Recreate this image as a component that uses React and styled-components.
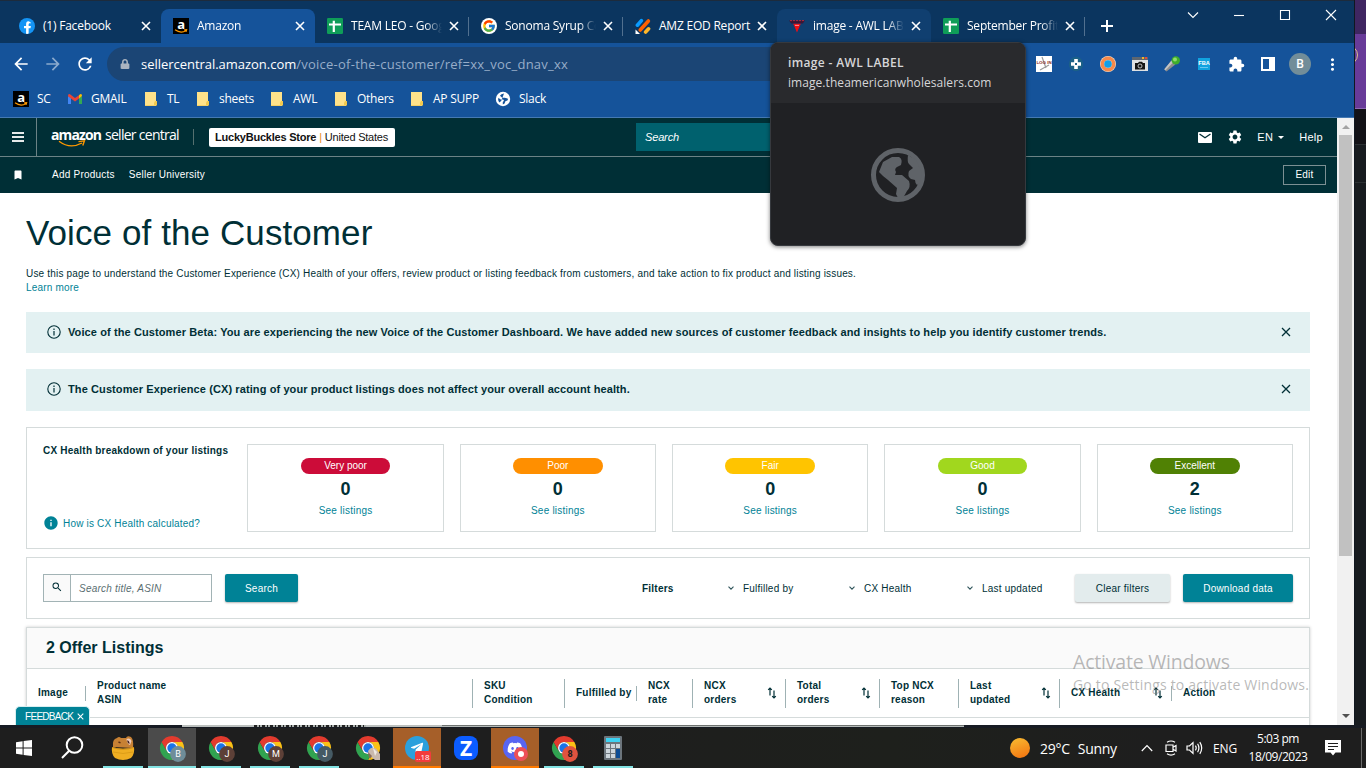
import styled, { createGlobalStyle } from "styled-components";
import { FcGoogle } from "react-icons/fc";
import { FaDiscord, FaFacebookF, FaLock, FaTelegramPlane } from "react-icons/fa";
import {
  MdArrowBack,
  MdArrowForward,
  MdBookmark,
  MdExtension,
  MdInfo,
  MdMoreVert,
  MdRefresh,
  MdSearch,
  MdSettings,
} from "react-icons/md";

const tabs = [
  { title: "(1) Facebook", icon: "facebook" },
  { title: "Amazon", icon: "amazon", active: true },
  { title: "TEAM LEO - Goog", icon: "sheets", divider: true },
  { title: "Sonoma Syrup Co", icon: "google", divider: true },
  { title: "AMZ EOD Report", icon: "jotform" },
  { title: "image - AWL LAB", icon: "awl", hover: true },
  { title: "September Profit", icon: "sheets", divider: true },
];

const bookmarks = [
  { label: "SC", icon: "amazon", width: 54 },
  { label: "GMAIL", icon: "gmail", width: 76 },
  { label: "TL", icon: "folder", width: 52 },
  { label: "sheets", icon: "folder", width: 74 },
  { label: "AWL", icon: "folder", width: 64 },
  { label: "Others", icon: "folder", width: 76 },
  { label: "AP SUPP", icon: "folder", width: 86 },
  { label: "Slack", icon: "globe", width: 70 },
];

const ratings = [
  { label: "Very poor", count: 0, color: "#cc0c39" },
  { label: "Poor", count: 0, color: "#ff8f00" },
  { label: "Fair", count: 0, color: "#ffc400" },
  { label: "Good", count: 0, color: "#a1d71e" },
  { label: "Excellent", count: 2, color: "#508104" },
];

const columns = [
  { lines: ["Image"] },
  { lines: ["Product name", "ASIN"], tall: true },
  { lines: ["SKU", "Condition"], tall: true },
  { lines: ["Fulfilled by"] },
  { lines: ["NCX", "rate"], tall: true },
  { lines: ["NCX", "orders"], tall: true, sort: true },
  { lines: ["Total", "orders"], tall: true, sort: true },
  { lines: ["Top NCX", "reason"], tall: true },
  { lines: ["Last", "updated"], tall: true, sort: true },
  { lines: ["CX Health"], sort: true },
  { lines: ["Action"], last: true },
];

const taskItems = [
  { icon: "frog", line: "short" },
  { icon: "chrome", badge: "B", color: "#6f8d99", state: "active" },
  { icon: "chrome", badge: "J", color: "#5d4037", line: "short" },
  { icon: "chrome", badge: "M", color: "#5d4037", line: "short" },
  { icon: "chrome", badge: "J", color: "#455a64", line: "short" },
  { icon: "chrome", photo: true },
  { icon: "telegram", state: "alert" },
  { icon: "zoom" },
  { icon: "discord", state: "alert" },
  { icon: "chrome", badge: "8", color: "#e0533f", dark: true, line: "short" },
  { icon: "calculator", line: "short" },
];

const AmazonIcon = () => (
  <svg width="16" height="16" viewBox="0 0 16 16">
    <rect width="16" height="16" fill="#000" />
    <text x="8" y="11" textAnchor="middle" fontFamily="Open Sans, sans-serif" fontWeight="700" fontSize="13" fill="#fff">
      a
    </text>
    <path d="M2 11.8 Q8 16 13 12.4 M11.2 11.9 L13.6 11.7 L13 13.8" fill="none" stroke="#f90" strokeWidth="1.2" />
  </svg>
);

const SheetsIcon = () => (
  <svg width="16" height="16" viewBox="0 0 16 16">
    <rect width="16" height="16" rx="1.2" fill="#0f9d58" />
    <path d="M2 6.5H14M6.8 2.8V14" stroke="#fff" strokeWidth="2.2" />
  </svg>
);

const JotformIcon = () => (
  <svg width="16" height="16" viewBox="0 0 16 16" strokeLinecap="round" strokeWidth="3.6">
    <path d="M2.4 7.2L6.4 2.6" stroke="#0a9bff" />
    <path d="M5.2 12L13.4 3" stroke="#ff6100" />
    <path d="M10.6 14L13.6 10.8" stroke="#ffb629" />
    <path d="M0.5 11.5V16H5Z" fill="#fff" />
  </svg>
);

const AwlIcon = () => (
  <svg width="16" height="16" viewBox="0 0 16 16">
    <path d="M0 2.5H16L13.8 5.5H2.2Z" fill="#3c1535" />
    <path d="M1 2.6H15" stroke="#b5293c" strokeDasharray="2 1" />
    <path d="M4.2 5.8H11.8L8 14.4Z" fill="#f20d14" />
    <path d="M6 7.4H10" stroke="#fbb" strokeWidth="0.8" />
  </svg>
);

const GmailIcon = () => (
  <svg width="16" height="16" viewBox="0 0 16 16">
    <path d="M1 5V13H4V7Z" fill="#4285f4" />
    <path d="M12 7V13H15V5Z" fill="#34a853" />
    <path d="M12 4.2L13 3.3Q15 2.4 15 5L12 7.4Z" fill="#fbbc04" />
    <path d="M1 5Q1 2.4 3 3.3L8 7.1L12 4.2V7.4L8 10.5L1 5.2Z" fill="#ea4335" />
  </svg>
);

const FolderIcon = () => (
  <svg width="16" height="16" viewBox="0 0 16 16">
    <path d="M2 1H13V15H2Z" fill="#ffe28a" />
    <path d="M12 10H14V14.5H11V12Z" fill="#f2c94e" />
    <path d="M2 14.5H13" stroke="#f4d067" />
  </svg>
);

const SlackGlobe = () => (
  <svg width="16" height="16" viewBox="0 0 16 16">
    <circle cx="8" cy="8" r="7.2" fill="#fff" />
    <path d="M9 2.6Q6 3 5 4.8L7.2 6.8H9.8L12.6 7.6Q13.4 8.6 12.4 9.6L10.4 10.2L9.6 12.6L7.8 13.4V11L9 9.8L8.2 8.4H5.6L3.4 6.8Q2.4 9.6 4.2 11.4L6.2 10" fill="#15539a" />
  </svg>
);

const FacebookIcon = styled(FaFacebookF)`
  width: 16px;
  height: 16px;
  padding: 3px 3px 0 4px;
  border-radius: 50%;
  color: #fff;
  background: #1494f5;
`;

const WhiteDisc = styled.span`
  width: 16px;
  height: 16px;
  display: flex;
  align-items: center;
  justify-content: center;
  flex: none;
  border-radius: 50%;
  background: #fff;
`;

const favicons = {
  facebook: <FacebookIcon />,
  amazon: <AmazonIcon />,
  sheets: <SheetsIcon />,
  google: (
    <WhiteDisc>
      <FcGoogle size={14} />
    </WhiteDisc>
  ),
  jotform: <JotformIcon />,
  awl: <AwlIcon />,
  gmail: <GmailIcon />,
  folder: <FolderIcon />,
  globe: <SlackGlobe />,
};

const CloseIcon = ({ size = 10, width = 1.6 }) => (
  <svg width={size} height={size} viewBox="0 0 10 10">
    <path d="M1 1L9 9M9 1L1 9" stroke="currentColor" strokeWidth={width} fill="none" />
  </svg>
);

const SortIcon = () => (
  <svg width="10" height="12" viewBox="0 0 10 12" fill="none" stroke="#002f36" strokeWidth="1.2">
    <path d="M3 8.5V1.2M1.2 2.9L3 1L4.8 2.9" />
    <path d="M7 3.5V10.8M5.2 9.1L7 11L8.8 9.1" />
  </svg>
);

const ChevronIcon = () => (
  <svg width="6" height="4" viewBox="0 0 6 4">
    <path d="M0.5 0.6L3 3.1L5.5 0.6" fill="none" stroke="#30555b" strokeWidth="1.1" />
  </svg>
);

const ChromeIcon = ({ badge, color, dark, photo }) => (
  <svg width="28" height="28" viewBox="0 0 28 28">
    {["#fbc116", "#31a350", "#e33b2e"].map((fill, i) => (
      <path
        key={fill}
        d="M12 6H22.4A12 12 0 0 1 12 24L17.2 15A6 6 0 0 0 12 6Z"
        transform={`translate(2 2) rotate(${i * 120} 12 12)`}
        fill={fill}
      />
    ))}
    <circle cx="14" cy="14" r="6" fill="#fff" />
    <circle cx="14" cy="14" r="4.7" fill="#1a73e8" />
    {badge && <circle cx="20" cy="20" r="7.9" fill={color} />}
    {badge && (
      <text x="20" y="23.2" textAnchor="middle" fontFamily="Roboto, sans-serif" fontWeight={dark ? 700 : 400} fontSize="9" fill={dark ? "#1b1b1b" : "#fff"}>
        {badge}
      </text>
    )}
    {photo && (
      <g>
        <path d="M14 17Q17 12 22 14.5L26 20V26H21L16 22Z" fill="#c9b8ac" />
        <path d="M14 18L18 22L16 25L14.5 22Z" fill="#8a6a58" />
        <path d="M19 14L23 18L21 22Z" fill="#efe9e4" />
      </g>
    )}
  </svg>
);

const FrogIcon = () => (
  <svg width="28" height="28" viewBox="0 0 28 28">
    <path d="M4 13Q3 5 8 4Q10 2 12 4H17Q18 1 22 3Q25 6 24 14Z" fill="#c78134" />
    <path d="M3 13Q14 16.5 25 13Q26 20 22 24Q14 28 6 24Q2 20 3 13Z" fill="#efae22" />
    <path d="M3 13.4Q14 17 25 13.4" stroke="#c98a1a" fill="none" />
    <path d="M4 18Q14 21 24 18" stroke="#dc9d18" fill="none" />
    <path d="M17.5 5Q21 3.5 22.5 7L21 11Q18 10 17.5 5Z" fill="#f0cdbd" />
    <path d="M18 6.5Q20.5 6 20.5 10Q18.5 9.5 18 6.5Z" fill="#432017" />
    <path d="M9.5 8L11.5 8.8" stroke="#5a2d12" strokeWidth="1.4" />
  </svg>
);

const CalculatorIcon = () => (
  <svg width="28" height="28" viewBox="0 0 28 28">
    <rect x="5" y="2" width="18" height="24" rx="1" fill="#6c757c" />
    <rect x="7" y="4" width="14" height="4" fill="#3ed2f2" />
    {[0, 1, 2].map((row) =>
      [0, 1, 2].map((col) => (
        <rect key={`${row}${col}`} x={7 + col * 5} y={10 + row * 5} width="4" height="4" fill="#cdd6dc" />
      ))
    )}
    <rect x="17" y="15" width="4" height="9" fill="#0c4c94" />
  </svg>
);

const TaskIcon = ({ item }) => {
  if (item.icon === "chrome") return <ChromeIcon {...item} />;
  if (item.icon === "frog") return <FrogIcon />;
  if (item.icon === "calculator") return <CalculatorIcon />;
  if (item.icon === "zoom") return <ZoomTile>Z</ZoomTile>;
  if (item.icon === "telegram")
    return (
      <Disc $color="#2ba0dc">
        <FaTelegramPlane size={14} />
        <CountBadge>..18</CountBadge>
      </Disc>
    );
  return (
    <Disc $color="#5865f2">
      <FaDiscord size={16} />
      <RecordBadge />
    </Disc>
  );
};

const Extensions = () => (
  <ExtensionRow>
    <svg width="16" height="16" viewBox="0 0 16 16">
      <rect width="16" height="16" fill="#fff" />
      <path d="M6 1L10 12M4 14L13 9" stroke="#9b9b9b" strokeWidth="1.2" />
      <text x="8" y="8" textAnchor="middle" fontFamily="Liberation Sans, sans-serif" fontWeight="700" fontSize="4.4" fill="#8b1f24">
        LOG IN
      </text>
    </svg>
    <svg width="16" height="16" viewBox="0 0 16 16">
      <circle cx="8" cy="8" r="7.2" fill="#1c6187" />
      <path d="M8 3V13M3 8H13" stroke="#fff" strokeWidth="3.6" />
      <rect x="7" y="7" width="2" height="2" fill="#1c6187" />
    </svg>
    <svg width="16" height="16" viewBox="0 0 16 16">
      <circle cx="8" cy="8" r="8" fill="#f6dcc4" />
      <circle cx="8" cy="8" r="5.7" fill="none" stroke="#f5894a" strokeWidth="3.4" />
      <circle cx="8" cy="8" r="3.8" fill="#0f9fe8" />
    </svg>
    <svg width="16" height="16" viewBox="0 0 16 16">
      <path d="M0 2H16V15H0Z" fill="#dfe1e3" />
      <path d="M0 1H16V4H0Z" fill="#5d6670" />
      <path d="M10 1H12V3H10Z" fill="#f0b429" />
      <path d="M13 1H15V3H13Z" fill="#e04a3f" />
      <path d="M3 7H6L7 5.8H10L11 7H13V13.5H3Z" fill="#151515" />
      <circle cx="8" cy="10" r="2" fill="none" stroke="#dfe1e3" strokeWidth="0.8" />
    </svg>
    <svg width="16" height="16" viewBox="0 0 16 16">
      <path d="M7.5 4.6L11.4 8.5L2.5 15.5L0.3 13.3Z" fill="#8d8d8d" />
      <path d="M7.5 4.6L9.2 6.3L1.4 14.4L0.3 13.3Z" fill="#c4c4c4" />
      <circle cx="11.8" cy="4.4" r="4.2" fill="#3fae2a" />
      <circle cx="11" cy="3.4" r="2" fill="#8fdc6c" />
    </svg>
    <svg width="16" height="16" viewBox="0 0 16 16">
      <rect x="2" y="2" width="12" height="12" fill="#11a3e0" />
      <text x="8" y="9" textAnchor="middle" fontFamily="Liberation Sans, sans-serif" fontWeight="700" fontSize="5.6" fill="#fff">
        FBA
      </text>
      <path d="M4 11.5H12" stroke="#7fd0f2" strokeWidth="0.8" />
    </svg>
    <MdExtension size={17} />
    <svg width="16" height="16" viewBox="0 0 16 16">
      <path d="M2 2H14V14H2Z" fill="none" stroke="#fff" strokeWidth="2" />
      <rect x="9" y="2" width="5" height="12" fill="#fff" />
    </svg>
    <Avatar>B</Avatar>
    <MdMoreVert size={19} />
  </ExtensionRow>
);

const BrowserTop = () => (
  <>
    <TabStrip>
      {tabs.map((tab, i) => (
        <Tab key={i} $active={tab.active} $hover={tab.hover} $divider={tab.divider}>
          {favicons[tab.icon]}
          <TabTitle>{tab.title}</TabTitle>
          <CloseIcon />
        </Tab>
      ))}
      <NewTab>
        <svg width="12" height="12" viewBox="0 0 12 12">
          <path d="M6 0V12M0 6H12" stroke="#fff" strokeWidth="2" />
        </svg>
      </NewTab>
      <WindowControls>
        <svg width="12" height="12" viewBox="0 0 12 12">
          <path d="M1 3.5L6 8.5L11 3.5" />
        </svg>
        <svg width="12" height="12" viewBox="0 0 12 12">
          <path d="M1 6.5H11" />
        </svg>
        <svg width="12" height="12" viewBox="0 0 12 12">
          <path d="M1.5 1.5H10.5V10.5H1.5Z" />
        </svg>
        <svg width="12" height="12" viewBox="0 0 12 12">
          <path d="M1 1L11 11M11 1L1 11" />
        </svg>
      </WindowControls>
    </TabStrip>
    <Toolbar>
      <NavIcons>
        <MdArrowBack />
        <MdArrowForward opacity={0.5} />
        <MdRefresh />
      </NavIcons>
      <AddressBar>
        <FaLock size={10} color="#aab3c0" />
        <Url>
          <b>sellercentral.amazon.com</b>
          <span>/voice-of-the-customer/ref=xx_voc_dnav_xx</span>
        </Url>
      </AddressBar>
      <Extensions />
    </Toolbar>
    <BookmarkBar>
      {bookmarks.map((mark) => (
        <Bookmark key={mark.label} $width={mark.width}>
          {favicons[mark.icon]}
          <span>{mark.label}</span>
        </Bookmark>
      ))}
    </BookmarkBar>
  </>
);

const TabPreview = () => (
  <Preview>
    <PreviewHead>
      <b>image - AWL LABEL</b>
      <span>image.theamericanwholesalers.com</span>
    </PreviewHead>
    <PreviewBody>
      <svg width="56" height="56" viewBox="0 0 56 56" fill="#5f6368">
        <circle cx="28" cy="28" r="24.5" fill="none" stroke="#5f6368" strokeWidth="5" />
        <path d="M9 25L13 15L22 10H29Q33 12 31 18L27 20Q24 22 26 25L25 28H32L39 34Q41 40 37 44L33 51H28L26 47L27 41L18 33L13 29Z" />
        <path d="M38 8L46 13L52 26L50 36L47 38Q45 36 45 33L41 32Q37 29 39 24L43 21L39 17Q37 15 38 8Z" />
      </svg>
    </PreviewBody>
  </Preview>
);

const SellerHeader = () => (
  <Header>
    <HeaderTop>
      <MenuButton>
        <i />
        <i />
        <i />
      </MenuButton>
      <Logo>
        <b>amazon</b>
        <span>seller central</span>
        <Smile width="28" height="8" viewBox="0 0 28 8">
          <path d="M1 1.2Q12 9.5 24 3M20.5 1.6L26.4 0.9L24.8 5.6" />
        </Smile>
      </Logo>
      <StoreButton>
        <b>LuckyBuckles Store</b>
        <em>|</em>
        <span>United States</span>
      </StoreButton>
      <HeaderSearch>Search</HeaderSearch>
      <HeaderActions>
        <svg width="14" height="11" viewBox="0 0 14 11">
          <rect width="14" height="11" rx="1" fill="#fff" />
          <path d="M1.5 2L7 5.8L12.5 2" fill="none" stroke="#002f36" strokeWidth="1.3" />
        </svg>
        <MdSettings size={16} />
        <Language>
          EN
          <Caret />
        </Language>
        <span>Help</span>
      </HeaderActions>
    </HeaderTop>
    <SubNav>
      <MdBookmark size={12} />
      <NavLink $left={28}>Add Products</NavLink>
      <NavLink $left={14}>Seller University</NavLink>
      <EditButton>Edit</EditButton>
    </SubNav>
  </Header>
);

const Notice = ({ children, height }) => (
  <NoticeBox $height={height}>
    <svg width="14" height="14" viewBox="0 0 14 14">
      <circle cx="7" cy="7" r="6.2" fill="none" stroke="#002f36" strokeWidth="1.1" />
      <path d="M7 6V10.4M7 3.6V5" stroke="#002f36" strokeWidth="1.2" />
    </svg>
    <span>{children}</span>
    <CloseIcon width={1.3} />
  </NoticeBox>
);

const Taskbar = () => (
  <Bar>
    <StartButton>
      <svg width="16" height="16" viewBox="0 0 16 16" fill="#fff">
        <path d="M0 2.2L6.6 1.3V7.5H0ZM7.6 1.1L16 0V7.5H7.6ZM0 8.5H6.6V14.7L0 13.8ZM7.6 8.5H16V16L7.6 14.9Z" />
      </svg>
    </StartButton>
    <SearchButton>
      <svg width="23" height="23" viewBox="0 0 23 23" fill="none" stroke="#fff" strokeWidth="2">
        <circle cx="13.5" cy="9" r="7.8" />
        <path d="M8.2 14.8L1 22" />
      </svg>
    </SearchButton>
    {taskItems.map((item, i) => (
      <TaskButton key={i} $state={item.state} $line={item.line}>
        <TaskIcon item={item} />
      </TaskButton>
    ))}
    <Tray>
      <Sun />
      <Weather>
        <span>29°C</span>
        <span>Sunny</span>
      </Weather>
      <TrayIcons>
        <svg width="12" height="8" viewBox="0 0 12 8">
          <path d="M0.8 7L6 1.6L11.2 7" />
        </svg>
        <svg width="12" height="16" viewBox="0 0 12 16">
          <path d="M1 5H8V11.5H1ZM8 7.3L11 5.5V11L8 9.2M2 2.3Q6 -0.3 10 2.3M2 13.8Q6 16.4 10 13.8" />
        </svg>
        <svg width="17" height="14" viewBox="0 0 17 14">
          <path d="M1 5H3.5L7 1.6V12.4L3.5 9H1ZM9.4 4.6Q11 7 9.4 9.4M11.6 2.8Q14.2 7 11.6 11.2M13.8 1.2Q17.6 7 13.8 12.8" />
        </svg>
      </TrayIcons>
      <Lang>ENG</Lang>
      <Clock>
        <span>5:03 pm</span>
        <span>18/09/2023</span>
      </Clock>
      <svg width="16" height="16" viewBox="0 0 16 16">
        <path d="M0 0H16V12.5H10.5L8 15.5L5.5 12.5H0Z" fill="#fff" />
        <path d="M3 3.5H13M3 6.5H13M3 9.5H9" stroke="#1e1e1e" />
      </svg>
      <ShowDesktop />
    </Tray>
  </Bar>
);

const App = () => {
  return (
    <Screen>
      <GlobalStyle />
      <Desktop>
        <Window>
          <BrowserTop />
          <Viewport>
            <Page>
              <SellerHeader />
              <Content>
                <Title>Voice of the Customer</Title>
                <Intro>
                  Use this page to understand the Customer Experience (CX) Health of your offers, review product or
                  listing feedback from customers, and take action to fix product and listing issues.
                  <LearnMore>Learn more</LearnMore>
                </Intro>
                <Notice height={41}>
                  Voice of the Customer Beta: You are experiencing the new Voice of the Customer Dashboard. We have
                  added new sources of customer feedback and insights to help you identify customer trends.
                </Notice>
                <Notice height={42}>
                  The Customer Experience (CX) rating of your product listings does not affect your overall account
                  health.
                </Notice>
                <HealthPanel>
                  <HealthLabel>
                    <b>CX Health breakdown of your listings</b>
                    <HelpLink>
                      <MdInfo size={16} />
                      <span>How is CX Health calculated?</span>
                    </HelpLink>
                  </HealthLabel>
                  {ratings.map((rating) => (
                    <RatingCard key={rating.label}>
                      <Pill $color={rating.color}>{rating.label}</Pill>
                      <Count>{rating.count}</Count>
                      <SeeListings>See listings</SeeListings>
                    </RatingCard>
                  ))}
                </HealthPanel>
                <FilterPanel>
                  <SearchField>
                    <SearchCell>
                      <MdSearch size={12} />
                    </SearchCell>
                    <Placeholder>Search title, ASIN</Placeholder>
                  </SearchField>
                  <Button $primary $width={73}>
                    Search
                  </Button>
                  <FilterLabel>Filters</FilterLabel>
                  <Filter $width={121}>
                    <ChevronIcon />
                    Fulfilled by
                  </Filter>
                  <Filter $width={118}>
                    <ChevronIcon />
                    CX Health
                  </Filter>
                  <Filter $width={108}>
                    <ChevronIcon />
                    Last updated
                  </Filter>
                  <Button $width={95}>Clear filters</Button>
                  <Button $primary $width={110}>
                    Download data
                  </Button>
                </FilterPanel>
                <Listings>
                  <ListingsTitle>2 Offer Listings</ListingsTitle>
                  <HeadRow>
                    {columns.map((column, i) => (
                      <HeadCell key={i} $tall={column.tall} $last={column.last}>
                        <div>
                          {column.lines.map((line) => (
                            <p key={line}>{line}</p>
                          ))}
                        </div>
                        {column.sort && <SortIcon />}
                      </HeadCell>
                    ))}
                  </HeadRow>
                </Listings>
              </Content>
              <Feedback>
                FEEDBACK <CloseIcon size={7} width={1.5} />
              </Feedback>
            </Page>
            <Scrollbar>
              <Arrow $up />
              <Thumb />
              <Arrow />
            </Scrollbar>
          </Viewport>
          <TabPreview />
        </Window>
        <Behind>
          <BehindTop>
            <Ring />
          </BehindTop>
          <BehindRows>
            <i />
            <i />
          </BehindRows>
        </Behind>
        <Watermark>
          <h2>Activate Windows</h2>
          <p>Go to Settings to activate Windows.</p>
        </Watermark>
      </Desktop>
      <Sliver>
        <SliverLight />
      </Sliver>
      <Taskbar />
    </Screen>
  );
};

export default App;

const GlobalStyle = createGlobalStyle`
  * {
    box-sizing: border-box;
    margin: 0;
    padding: 0;
  }

  body {
    overflow: hidden;
  }

  svg {
    display: block;
    flex: none;
  }
`;

const Screen = styled.div`
  width: 1366px;
  height: 768px;
  display: flex;
  flex-direction: column;
  overflow: hidden;
  white-space: nowrap;
  background: #1e1e1e;
  font-family: "Liberation Sans", Arial, sans-serif;
`;

const Desktop = styled.div`
  position: relative;
  display: flex;
  height: 725px;
`;

const Window = styled.div`
  position: relative;
  width: 1354px;
  display: flex;
  flex-direction: column;
  background: #15539a;
  color: #fff;
`;

const TabStrip = styled.div`
  height: 43px;
  padding: 8px 0 0 7px;
  display: flex;
  border-top: 1px solid #1d2b3c;
  background: #0b355f;
  font-family: "Open Sans", sans-serif;
  font-size: 12px;
  letter-spacing: -0.22px;
`;

const Tab = styled.div`
  position: relative;
  width: 154px;
  height: 34px;
  padding: 0 10px 0 12px;
  display: flex;
  align-items: center;
  border-radius: 8px 8px 0 0;
  background: ${({ $active, $hover }) => ($active ? "#15539a" : $hover ? "#103f70" : "none")};

  &::after {
    content: "";
    display: ${({ $divider }) => ($divider ? "block" : "none")};
    position: absolute;
    right: 0;
    top: 8px;
    width: 1px;
    height: 19px;
    background: #51708f;
  }
`;

const TabTitle = styled.span`
  width: 91px;
  margin: -2px 7px 0 8px;
  mask-image: linear-gradient(90deg, #000 74px, transparent 91px);

  ${Tab}:first-child &, ${Tab}:nth-child(5) & {
    mask-image: none;
  }
`;

const NewTab = styled.div`
  padding: 11px 16px;
`;

const WindowControls = styled.div`
  margin-left: auto;
  padding-right: 17px;
  display: flex;
  gap: 34px;

  path {
    fill: none;
    stroke: #fff;
    stroke-width: 1.1;
  }
`;

const Toolbar = styled.div`
  height: 43px;
  padding-bottom: 1px;
  display: flex;
  align-items: center;
`;

const NavIcons = styled.div`
  width: 107px;
  padding: 0 0 1px 11px;
  display: flex;
  gap: 12px;
  font-size: 20px;
`;

const AddressBar = styled.div`
  width: 900px;
  height: 34px;
  padding: 0 0 1px 13px;
  display: flex;
  align-items: center;
  gap: 11px;
  border-radius: 17px;
  background: #1b4575;
`;

const Url = styled.div`
  font-family: "Open Sans", sans-serif;
  font-size: 13px;

  b {
    font-weight: 400;
    letter-spacing: -0.03px;
  }
  span {
    color: #97adc9;
    letter-spacing: 0.25px;
  }
`;

const ExtensionRow = styled.div`
  margin-left: auto;
  padding: 0 6px 0 0;
  display: grid;
  grid-template-columns: repeat(10, 32px);
  place-items: center;
`;

const Avatar = styled.div`
  width: 22px;
  height: 22px;
  border-radius: 50%;
  background: #728d99;
  font: 500 12px/22px Roboto, sans-serif;
  text-align: center;
`;

const BookmarkBar = styled.div`
  height: 32px;
  padding: 5px 0 0 13px;
  display: flex;
  border-bottom: 1px solid #4579b2;
`;

const Bookmark = styled.div`
  width: ${({ $width }) => $width}px;
  height: 16px;
  display: flex;
  align-items: center;
  gap: 8px;
  font-family: "Open Sans", sans-serif;
  font-size: 12px;
  letter-spacing: -0.25px;

  span {
    margin-top: -1px;
  }
`;

const Viewport = styled.div`
  flex: 1;
  display: flex;
  min-height: 0;
`;

const Page = styled.div`
  position: relative;
  width: 1337px;
  overflow: hidden;
  background: #fff;
  color: #002f36;
`;

const Header = styled.header`
  background: #002f36;
  color: #fff;
`;

const HeaderTop = styled.div`
  height: 39px;
  display: flex;
  align-items: center;
  border-bottom: 1px solid #6b8386;
`;

const MenuButton = styled.div`
  width: 37px;
  height: 38px;
  padding: 0 12px;
  display: flex;
  flex-direction: column;
  justify-content: center;
  gap: 2px;
  border-right: 1px solid #6b8386;

  i {
    height: 2px;
    background: #e6eaea;
  }
`;

const Logo = styled.div`
  position: relative;
  width: 157px;
  height: 16px;
  margin-right: 15px;
  padding-left: 14px;
  display: flex;
  align-items: center;
  gap: 4px;
  border-right: 1px solid #55706f;
  font-family: "Open Sans", sans-serif;
  font-size: 14px;
  line-height: 12px;

  b {
    margin-top: -4px;
    letter-spacing: -0.9px;
  }
  span {
    margin-top: -4px;
    letter-spacing: -0.72px;
  }
`;

const Smile = styled.svg`
  position: absolute;
  left: 21px;
  top: 11px;
  fill: none;
  stroke: #f90;
  stroke-width: 1.4;
`;

const StoreButton = styled.div`
  width: 186px;
  height: 19px;
  padding-left: 6px;
  border-radius: 2px;
  background: #fff;
  color: #111;
  font-size: 11px;
  line-height: 19px;
  letter-spacing: -0.22px;

  em {
    margin: 0 3px;
    color: #e88b1c;
    font-style: normal;
  }
`;

const HeaderSearch = styled.div`
  width: 330px;
  height: 28px;
  margin-left: 241px;
  padding-left: 9px;
  background: #00616e;
  font-size: 11px;
  font-style: italic;
  line-height: 28px;
  letter-spacing: -0.15px;
`;

const HeaderActions = styled.div`
  margin-left: auto;
  padding-right: 14px;
  display: flex;
  align-items: center;
  gap: 15px;
  font-size: 11px;
  letter-spacing: 0.3px;

  svg + svg {
    margin-right: -1px;
  }
`;

const Language = styled.span`
  display: flex;
  align-items: center;
  gap: 5px;
`;

const Caret = styled.i`
  border: 3px solid transparent;
  border-top-color: #fff;
  border-bottom: 0;
`;

const SubNav = styled.nav`
  height: 36px;
  padding: 0 11px 1px 12px;
  display: flex;
  align-items: center;
  font-size: 10px;
  letter-spacing: 0.23px;
`;

const NavLink = styled.span`
  margin-left: ${({ $left }) => $left}px;
`;

const EditButton = styled.span`
  width: 43px;
  height: 20px;
  margin-left: auto;
  border: 1px solid #7c9093;
  line-height: 18px;
  text-align: center;
`;

const Content = styled.main`
  padding: 20px 27px 0 26px;
  font-size: 10px;
  letter-spacing: 0.22px;
`;

const Title = styled.h1`
  font-size: 35px;
  font-weight: 400;
  line-height: 40px;
  letter-spacing: 0.1px;
`;

const Intro = styled.p`
  margin: 14px 0 17px;
  line-height: 14px;
  letter-spacing: 0.18px;
`;

const LearnMore = styled.a`
  display: block;
  color: #008296;
`;

const NoticeBox = styled.div`
  height: ${({ $height }) => $height}px;
  margin-bottom: 16px;
  padding: 0 19px 2px 21px;
  display: flex;
  align-items: center;
  background: #e3f1f2;
  font-size: 11px;
  font-weight: 700;
  letter-spacing: 0.1px;

  span {
    margin: 0 auto 0 7px;
  }
`;

const Panel = styled.section`
  border: 1px solid #d5dbdb;
  background: #fff;
`;

const HealthPanel = styled(Panel)`
  height: 122px;
  padding: 16px;
  display: grid;
  grid-template-columns: 188.4px repeat(5, 1fr);
  grid-template-rows: 88px;
  gap: 16px;
`;

const HealthLabel = styled.div`
  padding: 1px 0;
  display: flex;
  flex-direction: column;
  justify-content: space-between;
`;

const HelpLink = styled.a`
  display: flex;
  align-items: center;
  gap: 4px;
  color: #008296;
  letter-spacing: 0.19px;
`;

const RatingCard = styled.div`
  padding-top: 13px;
  display: flex;
  flex-direction: column;
  align-items: center;
  border: 1px solid #d5dbdb;
`;

const Pill = styled.span`
  width: 89.5px;
  height: 16px;
  border-radius: 8px;
  background: ${({ $color }) => $color};
  color: #fff;
  line-height: 16px;
  letter-spacing: 0;
  text-align: center;
`;

const Count = styled.b`
  margin-top: 5px;
  font-size: 18px;
  line-height: 20px;
  letter-spacing: 0;
`;

const SeeListings = styled.a`
  margin-top: 6px;
  color: #008296;
  line-height: 12px;
`;

const FilterPanel = styled(Panel)`
  height: 62px;
  margin: 8px 0;
  padding: 0 16px;
  display: flex;
  align-items: center;
`;

const SearchField = styled.div`
  width: 169px;
  height: 28px;
  margin-right: 13px;
  display: flex;
  border: 1px solid #a2b3b5;
`;

const SearchCell = styled.div`
  width: 27px;
  display: flex;
  justify-content: center;
  padding-top: 6px;
  border-right: 1px solid #a2b3b5;
  background: #fafafa;
`;

const Placeholder = styled.span`
  padding-left: 8px;
  color: #5a6e71;
  font-style: italic;
  line-height: 27px;
`;

const Button = styled.button`
  width: ${({ $width }) => $width}px;
  height: 28px;
  border: 0;
  border-radius: 2px;
  box-shadow: 0 1px 2px rgba(0, 0, 0, 0.3);
  background: ${({ $primary }) => ($primary ? "#008296" : "#e3eced")};
  color: ${({ $primary }) => ($primary ? "#fff" : "#002f36")};
  font: inherit;
  letter-spacing: inherit;

  & + & {
    margin-left: 13px;
  }
`;

const FilterLabel = styled.b`
  width: 86px;
  margin-left: 344px;
`;

const Filter = styled.span`
  width: ${({ $width }) => $width}px;
  display: flex;
  align-items: center;
  gap: 9px;
`;

const Listings = styled(Panel)`
  height: 110px;
  box-shadow: 0 0 3px rgba(0, 0, 0, 0.2);
`;

const ListingsTitle = styled.h3`
  height: 41px;
  padding-left: 19px;
  border-bottom: 1px solid #d5dbdb;
  background: #fafafa;
  font-size: 16px;
  line-height: 40px;
  letter-spacing: 0;
`;

const HeadRow = styled.div`
  height: 49px;
  display: grid;
  grid-template-columns: 59px 387px 92px 72px 56px 93px 94px 79px 101px 112px 1fr;
  border-bottom: 1px solid #d5dbdb;
  font-weight: 700;
  line-height: 14px;
`;

const HeadCell = styled.div`
  position: relative;
  padding: 0 9px 0 11px;
  display: flex;
  align-items: center;
  justify-content: space-between;

  &::after {
    content: "";
    display: ${({ $last }) => ($last ? "none" : "block")};
    position: absolute;
    right: 0;
    width: 1px;
    height: ${({ $tall }) => ($tall ? 29 : 15)}px;
    background: #9fb2b4;
  }
`;

const Feedback = styled.div`
  position: absolute;
  left: 15px;
  bottom: 0;
  width: 75px;
  height: 19px;
  padding-left: 9px;
  display: flex;
  align-items: center;
  gap: 4px;
  border: 1px solid #d9eef0;
  border-bottom: 0;
  border-radius: 5px 5px 0 0;
  background: #008296;
  color: #fff;
  font-size: 10px;
  letter-spacing: -0.7px;
`;

const Scrollbar = styled.div`
  width: 17px;
  display: flex;
  flex-direction: column;
  align-items: center;
  background: #f1f1f1;
`;

const Arrow = styled.i`
  margin: ${({ $up }) => ($up ? "7px 0 6px" : "auto 0 7px")};
  border: 4px solid transparent;
  border-top: ${({ $up }) => ($up ? "0" : "4px solid #505050")};
  border-bottom: ${({ $up }) => ($up ? "4px solid #a3a3a3" : "0")};
`;

const Thumb = styled.div`
  width: 13px;
  height: 421px;
  background: #c1c1c1;
`;

const Preview = styled.div`
  position: absolute;
  left: 770px;
  top: 42px;
  width: 256px;
  height: 204px;
  border: 1px solid #36393e;
  border-radius: 8px;
  overflow: hidden;
  box-shadow: 0 1px 4px rgba(0, 0, 0, 0.5);
  background: #202124;
`;

const PreviewHead = styled.div`
  height: 60px;
  padding: 10px 17px;
  display: flex;
  flex-direction: column;
  background: #292a2d;
  color: #d6d6d8;
  font-family: "Open Sans", sans-serif;
  font-size: 12px;
  line-height: 20px;

  b {
    font-weight: 600;
    letter-spacing: 0.35px;
  }
  span {
    letter-spacing: 0.06px;
  }
`;

const PreviewBody = styled.div`
  height: 143px;
  padding-top: 44px;
  display: flex;
  justify-content: center;
`;

const Behind = styled.div`
  flex: 1;
  border-left: 1px solid #101720;
  background: #171b1f;
`;

const BehindTop = styled.div`
  height: 109px;
  overflow: hidden;
  border-bottom: 1px solid #8d68b3;
  background: linear-gradient(#3f2661 34px, #683b99 34px);
`;

const Ring = styled.div`
  width: 20px;
  height: 20px;
  margin: 45px 0 0 -17px;
  border: 1px solid #d9c08c;
  border-radius: 50%;
`;

const BehindRows = styled.div`
  i {
    display: block;
    height: 38px;
    border-bottom: 1px solid #2b3033;
  }
  i:first-child {
    height: 36px;
    background: #121116;
  }
`;

const Watermark = styled.div`
  position: absolute;
  left: 1073px;
  top: 650px;
  color: rgba(125, 125, 125, 0.55);
  font-family: "Open Sans", sans-serif;

  h2 {
    font-size: 19.5px;
    font-weight: 400;
    line-height: 24px;
    letter-spacing: -0.2px;
  }
  p {
    font-size: 14px;
    line-height: 22px;
    letter-spacing: 0.19px;
  }
`;

const Sliver = styled.div`
  height: 3px;
  padding-left: 182px;
  background: #171b23;
`;

const SliverLight = styled.div`
  width: 782px;
  height: 2px;
  background: linear-gradient(90deg, #bcc0be 72px, transparent 72px 184px, #bcc0be 184px 260px, transparent 260px),
    repeating-linear-gradient(90deg, #222 0 3px, #aab0ad 3px 5px, #222 5px 6px, #aab0ad 6px 8px) 0 0 / 184px 3px
      no-repeat,
    linear-gradient(#6f7371 1px, #b5bab7 1px);
`;

const Bar = styled.footer`
  height: 40px;
  display: flex;
  align-items: stretch;
  background: linear-gradient(90deg, #1e1e1e 40%, #1e201c 65%, #1e1e1e 85%);
  color: #fff;
  font-family: "Open Sans", sans-serif;
`;

const StartButton = styled.div`
  width: 48px;
  padding: 12px 16px;
`;

const SearchButton = styled.div`
  width: 51px;
  padding: 8px 0 0 13px;
`;

const TaskButton = styled.div`
  position: relative;
  width: 48px;
  margin-right: 1px;
  display: flex;
  align-items: center;
  justify-content: center;
  background: ${({ $state }) => ($state === "active" ? "#4b4b4b" : $state === "alert" ? "#a65f29" : "none")};

  &::after {
    content: "";
    position: absolute;
    left: ${({ $line }) => ($line ? 4 : 0)}px;
    right: ${({ $line }) => ($line ? 4 : 0)}px;
    bottom: 0;
    height: ${({ $line, $state }) => ($line || $state ? 2 : 0)}px;
    background: ${({ $state }) => ($state === "alert" ? "#ff7a00" : "#83e3e3")};
  }
`;

const Disc = styled.div`
  position: relative;
  width: 24px;
  height: 24px;
  display: flex;
  align-items: center;
  justify-content: center;
  border-radius: 50%;
  background: ${({ $color }) => $color};
`;

const CountBadge = styled.span`
  position: absolute;
  left: 10px;
  bottom: -2px;
  width: 16px;
  height: 11px;
  border-radius: 2px;
  background: #f23c3c;
  font-size: 8px;
  line-height: 11px;
  text-align: center;
`;

const RecordBadge = styled.span`
  position: absolute;
  right: -1px;
  bottom: -1px;
  width: 14px;
  height: 14px;
  border: 4px solid #ed4f57;
  border-radius: 50%;
  background: #fff;
`;

const ZoomTile = styled.div`
  width: 24px;
  height: 24px;
  border-radius: 8px;
  background: #0b5cff;
  font: 700 21px/24px "Open Sans", sans-serif;
  text-align: center;
`;

const Tray = styled.div`
  flex: 1;
  display: flex;
  align-items: center;
  padding-left: 372px;
`;

const Sun = styled.div`
  width: 20px;
  height: 20px;
  border-radius: 50%;
  background: linear-gradient(160deg, #f9bd32, #f2700f);
`;

const Weather = styled.div`
  width: 101px;
  padding-left: 10px;
  display: flex;
  gap: 8px;
  font-size: 14px;
  letter-spacing: -0.27px;
`;

const TrayIcons = styled.div`
  width: 82px;
  padding-left: 10px;
  display: flex;
  align-items: center;
  gap: 12px;

  svg:last-child {
    margin-left: -3px;
  }
  path {
    fill: none;
    stroke: #fff;
    stroke-width: 1.2;
  }
`;

const Lang = styled.span`
  width: 31px;
  font-size: 12px;
  letter-spacing: -0.15px;
`;

const Clock = styled.div`
  width: 68px;
  margin-right: 13px;
  display: flex;
  flex-direction: column;
  align-items: center;
  font-size: 12px;
  line-height: 18px;
  letter-spacing: -0.47px;
`;

const ShowDesktop = styled.div`
  width: 5px;
  margin-left: auto;
  align-self: stretch;
  border-left: 1px solid #6a6a6a;
`;
